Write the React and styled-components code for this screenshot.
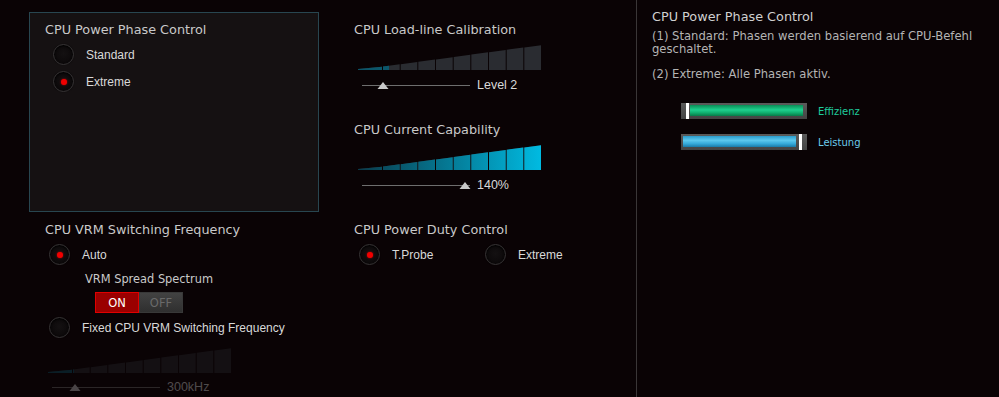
import styled, { createGlobalStyle } from "styled-components"

const GlobalStyle = createGlobalStyle`
  html, body {
    margin: 0;
    padding: 0;
    background: #0a0305;
    overflow: hidden;
  }
`

const bounds = [0, 25, 42.7, 60.3, 78, 95.7, 113.3, 131, 148.7, 166.3, 184]

function BarGraph({ id, fillTo, gradient }) {
  const W = 184
  const H = 25
  const h = (x) => Math.max(1, (H * x) / W)
  const segs = bounds.slice(0, -1).map((x0, i) => {
    const x1 = bounds[i + 1] - 1
    return `${x0},${H} ${x1},${H} ${x1},${H - h(x1)} ${x0},${H - h(x0)}`
  })
  return (
    <Graph width={W} height={H} viewBox={`0 0 ${W} ${H}`}>
      <defs>
        <linearGradient id={`${id}g`} x1="0" x2={W} y1="0" y2="0" gradientUnits="userSpaceOnUse">
          {gradient ? (
            <>
              <stop offset="0" stopColor="#0a3a4a" />
              <stop offset="1" stopColor="#00bbe2" />
            </>
          ) : (
            <>
              <stop offset="0" stopColor="#0b5468" />
              <stop offset="1" stopColor="#0e6a82" />
            </>
          )}
        </linearGradient>
        <clipPath id={`${id}c`}>
          <rect x="0" y="0" width={fillTo} height={H} />
        </clipPath>
      </defs>
      {segs.map((p, i) => (
        <polygon key={i} points={p} fill="#2a2c31" />
      ))}
      <g clipPath={`url(#${id}c)`}>
        {segs.map((p, i) => (
          <polygon key={i} points={p} fill={`url(#${id}g)`} />
        ))}
      </g>
    </Graph>
  )
}

function Slider({ pos, label }) {
  return (
    <SliderRow>
      <svg width="112" height="14" viewBox="0 0 112 14">
        <line x1="0" y1="7.5" x2="108" y2="7.5" stroke="#6e6e6e" strokeWidth="1" />
        <polygon points={`${pos - 5.5},11 ${pos + 5.5},11 ${pos},4`} fill="#c9c9c9" />
      </svg>
      <SliderLabel>{label}</SliderLabel>
    </SliderRow>
  )
}

function Radio({ on, width, children }) {
  return (
    <Option $width={width}>
      <RadioCircle $on={on} />
      <OptionLabel>{children}</OptionLabel>
    </Option>
  )
}

function Meter({ kind }) {
  const green = kind === "green"
  return (
    <MeterRow>
      <MeterBox $green={green}>
        {green && <Marker />}
        <MeterFill $green={green} />
        {!green && <Marker />}
      </MeterBox>
      <MeterLabel $green={green}>{green ? "Effizienz" : "Leistung"}</MeterLabel>
    </MeterRow>
  )
}

export default function App() {
  return (
    <>
      <GlobalStyle />
      <Page>
        <Main>
          <Panel>
            <Title>CPU Power Phase Control</Title>
            <RadioList $indent={8}>
              <Radio>Standard</Radio>
              <Radio on>Extreme</Radio>
            </RadioList>
          </Panel>

          <Column>
            <Title>CPU Load-line Calibration</Title>
            <GraphBlock>
              <BarGraph id="llc" fillTo={31} />
              <Slider pos={21} label="Level 2" />
            </GraphBlock>
            <Title $gap={29}>CPU Current Capability</Title>
            <GraphBlock>
              <BarGraph id="cur" fillTo={184} gradient />
              <Slider pos={103} label="140%" />
            </GraphBlock>
          </Column>

          <Column $left={16}>
            <Title>CPU VRM Switching Frequency</Title>
            <RadioList $indent={4}>
              <Radio on>Auto</Radio>
            </RadioList>
            <SubTitle>VRM Spread Spectrum</SubTitle>
            <Toggle>
              <ToggleHalf $on>ON</ToggleHalf>
              <ToggleHalf>OFF</ToggleHalf>
            </Toggle>
            <RadioList $indent={4} $top={4}>
              <Radio>Fixed CPU VRM Switching Frequency</Radio>
            </RadioList>
            <Disabled>
              <BarGraph id="vrm" fillTo={26} />
              <Slider pos={23} label="300kHz" />
            </Disabled>
          </Column>

          <Column>
            <Title>CPU Power Duty Control</Title>
            <DutyRow>
              <Radio on width={126}>T.Probe</Radio>
              <Radio>Extreme</Radio>
            </DutyRow>
          </Column>
        </Main>

        <Side>
          <SideTitle>CPU Power Phase Control</SideTitle>
          <SideText>(1) Standard: Phasen werden basierend auf CPU-Befehl geschaltet.</SideText>
          <SideText $top={12}>(2) Extreme: Alle Phasen aktiv.</SideText>
          <Meters>
            <Meter kind="green" />
            <Meter kind="blue" />
          </Meters>
        </Side>
      </Page>
    </>
  )
}

const Page = styled.div`
  display: flex;
  height: 397px;
  width: 999px;
  background: #0a0305;
  overflow: hidden;
`

const Main = styled.div`
  width: 636px;
  display: grid;
  grid-template-columns: 290px 1fr;
  grid-template-rows: 200px auto;
  column-gap: 35px;
  padding: 12px 0 0 29px;
  box-sizing: border-box;
`

const Panel = styled.div`
  background: #151112;
  border: 1px solid #284650;
  box-sizing: border-box;
  padding: 9px 15px;
`

const Column = styled.div`
  padding-top: 10px;
  padding-left: ${(p) => p.$left || 0}px;
`

const Title = styled.div`
  font-family: "DejaVu Sans", Verdana, sans-serif;
  font-size: 12.8px;
  line-height: 16px;
  color: #c9c9c9;
  white-space: nowrap;
  margin-top: ${(p) => p.$gap || 0}px;
`

const RadioList = styled.div`
  display: flex;
  flex-direction: column;
  gap: 6px;
  margin-top: ${(p) => (p.$top !== undefined ? p.$top : 6)}px;
  padding-left: ${(p) => p.$indent}px;
`

const Option = styled.div`
  display: flex;
  align-items: center;
  gap: 12px;
  height: 21px;
  width: ${(p) => (p.$width ? `${p.$width}px` : "auto")};
`

const RadioCircle = styled.span`
  width: 21px;
  height: 21px;
  flex: none;
  border-radius: 50%;
  box-sizing: border-box;
  border: 1.5px solid #363334;
  background: radial-gradient(circle at 50% 45%, #141112 0%, #0b0809 75%);
  box-shadow: 0 0 1px #000, inset 0 1px 2px #000;
  display: flex;
  align-items: center;
  justify-content: center;
  &::after {
    content: "";
    width: 6px;
    height: 6px;
    border-radius: 50%;
    background: #f00000;
    box-shadow: 0 0 2px #c00000;
    display: ${(p) => (p.$on ? "block" : "none")};
  }
`

const OptionLabel = styled.span`
  font-family: "Liberation Sans", Arial, sans-serif;
  font-size: 12px;
  color: #d9d9d9;
  white-space: nowrap;
`

const GraphBlock = styled.div`
  display: flex;
  flex-direction: column;
  gap: 7px;
  margin-top: 7px;
  padding-left: 4px;
`

const Graph = styled.svg`
  display: block;
`

const SliderRow = styled.div`
  display: flex;
  align-items: center;
  height: 16px;
  padding-left: 4px;
`

const SliderLabel = styled.span`
  font-family: "Liberation Sans", Arial, sans-serif;
  font-size: 12.5px;
  color: #d9d9d9;
  margin-left: 3px;
`

const SubTitle = styled.div`
  font-family: "DejaVu Sans", Verdana, sans-serif;
  font-size: 11.4px;
  line-height: 14px;
  color: #c9c9c9;
  margin: 7px 0 0 40px;
`

const Toggle = styled.div`
  display: flex;
  width: 88px;
  height: 21px;
  margin: 6px 0 0 50px;
`

const ToggleHalf = styled.div`
  flex: 1;
  display: flex;
  align-items: center;
  justify-content: center;
  box-sizing: border-box;
  font-family: "DejaVu Sans", Verdana, sans-serif;
  font-size: 11.5px;
  color: ${(p) => (p.$on ? "#ffffff" : "#6a6a6a")};
  background: ${(p) => (p.$on ? "#9a0000" : "linear-gradient(#424242, #2f2f2f)")};
  border: 1px solid ${(p) => (p.$on ? "#e00000" : "#383838")};
`

const Disabled = styled.div`
  opacity: 0.33;
  display: flex;
  flex-direction: column;
  gap: 6px;
  margin-top: 10px;
  padding-left: 3px;
`

const DutyRow = styled.div`
  display: flex;
  margin-top: 6px;
  padding-left: 5px;
`

const Side = styled.div`
  flex: 1;
  border-left: 1px solid #3a3637;
  padding: 9px 12px 0 15px;
`

const SideTitle = styled.div`
  font-family: "DejaVu Sans", Verdana, sans-serif;
  font-size: 12.8px;
  line-height: 16px;
  color: #d0d0d0;
`

const SideText = styled.div`
  font-family: "DejaVu Sans", Verdana, sans-serif;
  font-size: 11.6px;
  line-height: 13px;
  color: #b4b4b4;
  margin-top: ${(p) => p.$top || 5}px;
`

const Meters = styled.div`
  display: flex;
  flex-direction: column;
  gap: 15px;
  margin: 22px 0 0 29px;
`

const MeterRow = styled.div`
  display: flex;
  align-items: center;
  gap: 11px;
`

const MeterBox = styled.div`
  width: 126px;
  height: 16px;
  box-sizing: border-box;
  background: linear-gradient(#5a5a5a, #444444);
  display: flex;
  align-items: stretch;
  padding: ${(p) => (p.$green ? "0 4px 0 5px" : "0 5px 0 2px")};
  gap: ${(p) => (p.$green ? "1px" : "3px")};
`

const Marker = styled.div`
  width: 3px;
  background: #ffffff;
`

const MeterFill = styled.div`
  flex: 1;
  margin: 2px 0 3px;
  background: ${(p) =>
    p.$green
      ? "linear-gradient(#0a8c55, #1fd08e 45%, #10b070 70%, #077a48)"
      : "linear-gradient(#2a9ccc, #5cc8ee 40%, #36aada 70%, #1a7aa8)"};
`

const MeterLabel = styled.span`
  font-family: "DejaVu Sans", Verdana, sans-serif;
  font-size: 10px;
  color: ${(p) => (p.$green ? "#1ecb9c" : "#6ccbea")};
`
